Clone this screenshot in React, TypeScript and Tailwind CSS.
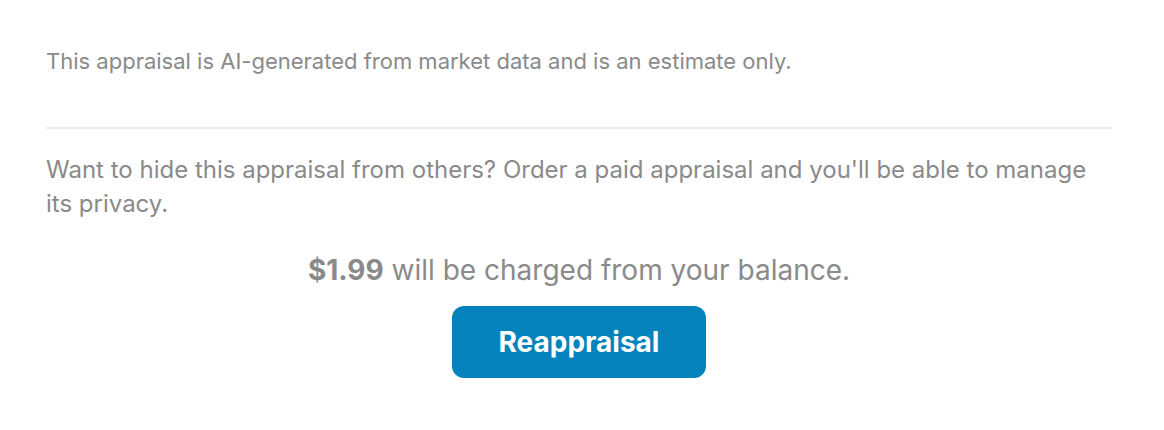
export default function App() {
  return (
    <div
      className="w-[1164px] h-[430px] bg-white pl-[46px] pr-[52px] pt-[46px]"
      style={{ fontFamily: "Inter, 'Noto Sans', sans-serif" }}
    >
      <p className="text-[22px] leading-[30px] text-[#8a8a8a]">
        This appraisal is AI-generated from market data and is an estimate only.
      </p>
      <div className="mt-[51px] h-[2px] bg-[#ececec]" />
      <p className="mt-[24px] text-[24px] leading-[34px] text-[#8a8a8a]">
        Want to hide this appraisal from others? Order a paid appraisal and you'll be able to manage its privacy.
      </p>
      <p className="mt-[32px] text-center text-[28px] leading-[34px] text-[#8a8a8a]">
        <span className="font-bold">$1.99</span> will be charged from your balance.
      </p>
      <div className="mt-[19px] flex justify-center">
        <button className="w-[254px] h-[72px] rounded-[12px] bg-[#0382bb] text-white text-[28px] font-bold">
          Reappraisal
        </button>
      </div>
    </div>
  );
}
